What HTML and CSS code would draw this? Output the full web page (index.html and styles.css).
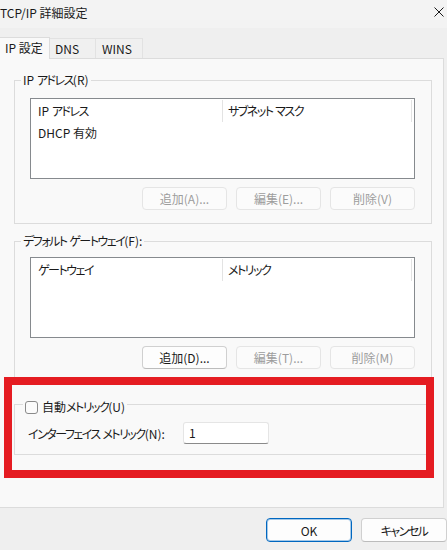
FILE: index.html
```html
<!DOCTYPE html>
<html lang="ja">
<head>
<meta charset="utf-8">
<title>TCP/IP 詳細設定</title>
<link rel="stylesheet" href="styles.css">
</head>
<body>
<div class="window">
  <div class="titlebar">
    <span class="title">TCP/IP 詳細設定</span>
    <svg class="close" width="10" height="10" viewBox="0 0 10 10"><path d="M0.5 0.5 L9.5 9.5 M9.5 0.5 L0.5 9.5" stroke="#1a1a1a" stroke-width="1" fill="none"/></svg>
  </div>
  <div class="tabs">
    <div class="tab active">IP 設定</div>
    <div class="tab dns">DNS</div>
    <div class="tab wins">WINS</div>
  </div>
  <div class="panel">
    <fieldset class="group g1">
      <legend>IP <span class="k">アドレス</span>(R)</legend>
      <div class="group-body">
        <div class="list">
          <div class="list-head">
            <div class="col c1">IP <span class="k">アドレス</span></div>
            <div class="col c2"><span class="k">サブネット</span> <span class="k">マスク</span></div>
          </div>
          <div class="list-row"><div class="col c1">DHCP 有効</div></div>
        </div>
        <div class="btn-row">
          <button class="btn" disabled>追加(A)...</button>
          <button class="btn" disabled>編集(E)...</button>
          <button class="btn" disabled>削除(V)</button>
        </div>
      </div>
    </fieldset>
    <fieldset class="group g2">
      <legend><span class="k">デフォルト</span> <span class="k">ゲートウェイ</span>(F):</legend>
      <div class="group-body">
        <div class="list">
          <div class="list-head">
            <div class="col c1"><span class="k">ゲートウェイ</span></div>
            <div class="col c2"><span class="k">メトリック</span></div>
          </div>
        </div>
        <div class="btn-row">
          <button class="btn enabled">追加(D)...</button>
          <button class="btn" disabled>編集(T)...</button>
          <button class="btn" disabled>削除(M)</button>
        </div>
      </div>
    </fieldset>
    <fieldset class="group g3">
      <legend><span class="check-wrap"><span class="checkbox"></span><span>自動<span class="k">メトリック</span>(U)</span></span></legend>
      <div class="group-body g3-body">
        <span class="metric-label"><span class="k">インターフェイス</span> <span class="k">メトリック</span>(N):</span>
        <span class="input">1</span>
      </div>
    </fieldset>
  </div>
  <div class="footer">
    <button class="btn footer-btn ok">OK</button>
    <button class="btn footer-btn enabled"><span class="k">キャンセル</span></button>
  </div>
  <div class="highlight"></div>
</div>
</body>
</html>
```
FILE: styles.css
```css
* { box-sizing: border-box; }
html, body {
  margin: 0;
  padding: 0;
}
body {
  width: 447px;
  height: 550px;
  overflow: hidden;
  background: #efefef;
  font-family: "Noto Sans CJK JP", "Noto Sans", sans-serif;
  font-size: 12px;
  font-feature-settings: "palt" 1;
  color: #1a1a1a;
}
.k { letter-spacing: -1.5px; }
.window {
  position: relative;
  width: 447px;
  height: 550px;
}
.titlebar {
  height: 28px;
  background: #f3f3f3;
  display: flex;
  align-items: center;
  justify-content: space-between;
  padding: 0 3px 2px 0;
}
.title {
  line-height: 16px;
}
.close { display: block; margin-top: -2px; }
.tabs {
  margin-top: 9px;
  height: 21px;
  display: flex;
  align-items: flex-end;
}
.tab {
  height: 20px;
  line-height: 19px;
  border: 1px solid #e2e2e2;
  border-bottom: none;
  border-left: none;
  background: #f0f0f0;
  padding-left: 6px;
}
.tab.active {
  position: relative;
  z-index: 1;
  width: 50px;
  height: 22px;
  margin-bottom: -1px;
  line-height: 20px;
  background: #f9f9f9;
  border: 1px solid #dcdcdc;
  border-bottom: none;
  border-left: none;
  padding-left: 5px;
}
.tab.dns { width: 46px; padding-left: 5px; }
.tab.wins { width: 47px; padding-left: 6px; }
.panel {
  width: 444px;
  height: 450px;
  background: #f9f9f9;
  border: 1px solid #dcdcdc;
  border-left: none;
  padding: 13px 11px 0 14px;
}
.group {
  margin: 0;
  padding: 0;
  min-width: 0;
  border: 1px solid #dcdcdc;
}
.group legend {
  margin-left: 6px;
  padding: 0 2px;
  line-height: 16px;
}
.g2 { margin-top: 9px; }
.g3 { margin-top: 10px; }
.g3 legend {
  margin-left: 8px;
  padding: 6px 2px 0 2px;
}
.group-body {
  padding: 10px 16px 13px 15px;
}
.g2 .group-body { padding-top: 8px; }
.list {
  height: 81px;
  background: #fff;
  border: 1px solid #868a8e;
}
.list-head {
  display: flex;
  height: 24px;
}
.list-head .col {
  border-right: 1px solid #e3e3e3;
  margin-top: 1px;
  height: 22px;
  line-height: 22px;
}
.col { padding-left: 7px; white-space: nowrap; }
.c1 { width: 192px; }
.c2 { width: 189px; padding-left: 5px; }
.list-row {
  height: 20px;
  line-height: 20px;
}
.btn-row {
  display: flex;
  justify-content: flex-end;
  gap: 9px;
  margin-top: 8px;
}
.btn {
  font: inherit;
  font-feature-settings: "palt" 1;
  width: 85px;
  height: 23px;
  padding: 0;
  border-radius: 4px;
  border: 1px solid #e5e5e5;
  background: #fbfbfb;
  color: #9d9d9d;
  white-space: nowrap;
}
.btn.enabled {
  background: #fdfdfd;
  border-color: #d0d0d0;
  border-bottom-color: #bcbcbc;
  color: #1a1a1a;
}
.check-wrap {
  display: flex;
  align-items: center;
  height: 16px;
  gap: 4px;
  white-space: nowrap;
}
.checkbox {
  width: 13px;
  height: 13px;
  border: 1px solid #8a8a8a;
  border-radius: 3px;
  background: #fbfbfb;
}
.g3-body {
  display: flex;
  align-items: center;
  padding: 7px 0 10px 13px;
}
.metric-label {
  width: 155px;
  flex-shrink: 0;
  white-space: nowrap;
}
.input {
  width: 86px;
  height: 22px;
  line-height: 20px;
  padding-left: 5px;
  background: #fff;
  border: 1px solid #e5e5e5;
  border-bottom: 1px solid #8a8a8a;
  border-radius: 3px;
}
.footer {
  display: flex;
  justify-content: flex-end;
  gap: 9px;
  margin-top: 10px;
}
.footer-btn {
  width: 86px;
  height: 24px;
}
.btn.ok {
  background: #fdfdfd;
  color: #1a1a1a;
  border: 1px solid #0067c0;
  box-shadow: inset 0 0 0 1px rgba(0, 103, 192, 0.35);
}
.highlight {
  position: absolute;
  left: 4px;
  top: 377px;
  width: 430px;
  height: 101px;
  border: 8px solid #e51c22;
  pointer-events: none;
}
```
